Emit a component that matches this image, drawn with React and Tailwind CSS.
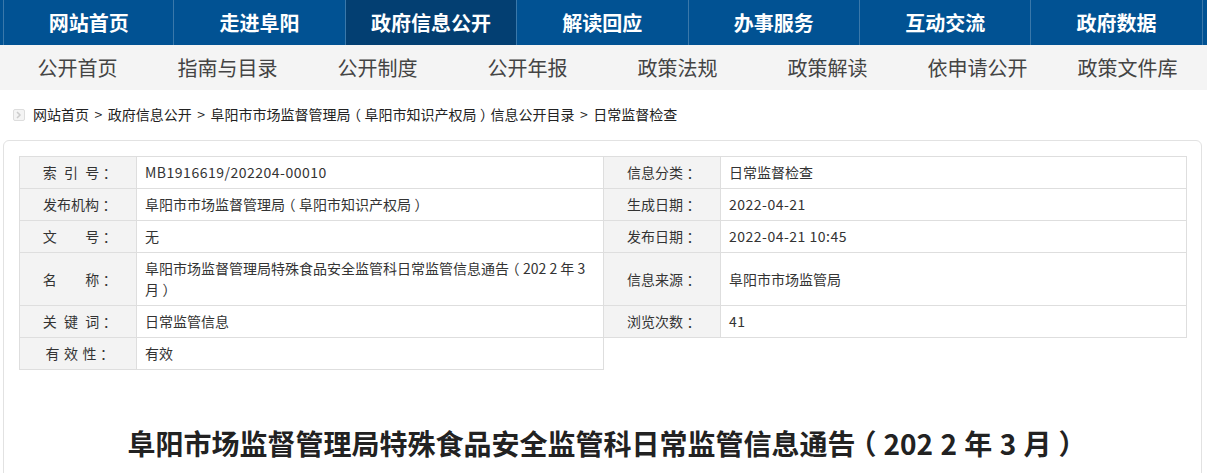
import React from "react";

const mainNav = ["网站首页", "走进阜阳", "政府信息公开", "解读回应", "办事服务", "互动交流", "政府数据"];
const subNav = ["公开首页", "指南与目录", "公开制度", "公开年报", "政策法规", "政策解读", "依申请公开", "政策文件库"];

// the reference font centres brackets and colons in their box, Noto doesn't
function Punc({ children }) {
  return <span className="inline-block w-[1em] text-center [font-feature-settings:'halt']">{children}</span>;
}

function Label({ children, className = "[word-spacing:4px]" }) {
  return (
    <div className={"flex items-center justify-center bg-[#f3f3f3] border-r border-b border-[#dedede] text-[14px] text-[#333] whitespace-pre " + className}>
      <span>
        {children}
        <Punc>：</Punc>
      </span>
    </div>
  );
}

function Value({ children, className = "" }) {
  return (
    <div className={"flex items-center border-r border-b border-[#dedede] pl-[8px] pr-[6px] text-[14px] leading-[21px] text-[#333] " + className}>
      <span>{children}</span>
    </div>
  );
}

export default function App() {
  return (
    <div className="w-[1207px] h-[473px] overflow-hidden bg-white [text-spacing-trim:space-all] [font-family:'Noto_Sans_CJK_SC','Noto_Sans',sans-serif]">
      <div className="h-[45px] bg-[#015293] pl-[3px] flex">
        {mainNav.map((item, i) => (
          <div
            key={item}
            className={
              "h-full border-l border-[#3a78aa] flex items-center justify-center text-[20px] font-bold text-white " +
              (i === 0 ? "w-[170.4px] " : "w-[171.4px] ") +
              (i === 2 ? "bg-[#033f72]" : "")
            }
          >
            {item}
          </div>
        ))}
        <div className="h-full border-l border-[#3a78aa]" />
      </div>
      <div className="h-[45px] bg-[#f4f4f4] pl-[2.5px] flex">
        {subNav.map((item) => (
          <div key={item} className="w-[150px] h-full flex items-center justify-center text-[20px] text-[#444]">
            {item}
          </div>
        ))}
      </div>
      <div className="h-[50px] pl-[13px] pb-[1px] flex items-center text-[14px] text-[#222]">
        <span className="w-[12px] h-[12px] mr-[8px] border border-[#ddd] rounded-[2px] bg-[#f4f4f4] flex items-center justify-center">
          <svg width="6" height="8" viewBox="0 0 6 8">
            <path d="M1 1l3 3-3 3" fill="none" stroke="#ccc" strokeWidth="1.5" />
          </svg>
        </span>
        <span>网站首页</span>
        <span className="mx-[5.5px]">&gt;</span>
        <span>政府信息公开</span>
        <span className="mx-[5.5px]">&gt;</span>
        <span>
          阜阳市市场监督管理局<Punc>（</Punc>阜阳市知识产权局<Punc>）</Punc>信息公开目录
        </span>
        <span className="mx-[5.5px]">&gt;</span>
        <span>日常监督检查</span>
      </div>
      <div className="ml-[3px] w-[1199px] h-[400px] border border-[#e2e2e2] rounded-[6px] pt-[15px] pl-[15px]">
        <div className="w-[1168px] grid grid-cols-[117px_467px_117px_466px] grid-rows-[32px_32px_32px_53px_32px_32px] border-l border-t border-[#dedede]">
          <Label>{"索 引 号"}</Label>
          <Value className="tracking-[0.5px]">MB1916619/202204-00010</Value>
          <Label>信息分类</Label>
          <Value>日常监督检查</Value>

          <Label>发布机构</Label>
          <Value>
            阜阳市市场监督管理局<Punc>（</Punc>阜阳市知识产权局<Punc>）</Punc>
          </Value>
          <Label>生成日期</Label>
          <Value className="tracking-[0.5px]">2022-04-21</Value>

          <Label>{"文    号"}</Label>
          <Value>无</Value>
          <Label>发布日期</Label>
          <Value className="tracking-[0.5px]">2022-04-21 10:45</Value>

          <Label>{"名    称"}</Label>
          <Value>
            阜阳市场监督管理局特殊食品安全监管科日常监管信息通告<Punc>（</Punc>202 2 年 3
            <br />
            月<Punc>）</Punc>
          </Value>
          <Label>信息来源</Label>
          <Value>阜阳市市场监管局</Value>

          <Label>{"关 键 词"}</Label>
          <Value>日常监管信息</Value>
          <Label>浏览次数</Label>
          <Value className="tracking-[0.5px]">41</Value>

          <Label className="[word-spacing:1.4px]">{"有 效 性"}</Label>
          <Value>有效</Value>
        </div>
        <h1 className="mt-[53px] pr-[13px] text-center text-[28px] leading-[40px] font-bold text-[#222] [word-spacing:1px]">
          阜阳市场监督管理局特殊食品安全监管科日常监管信息通告<Punc>（</Punc>202 2 年 3 月<Punc>）</Punc>
        </h1>
      </div>
    </div>
  );
}
